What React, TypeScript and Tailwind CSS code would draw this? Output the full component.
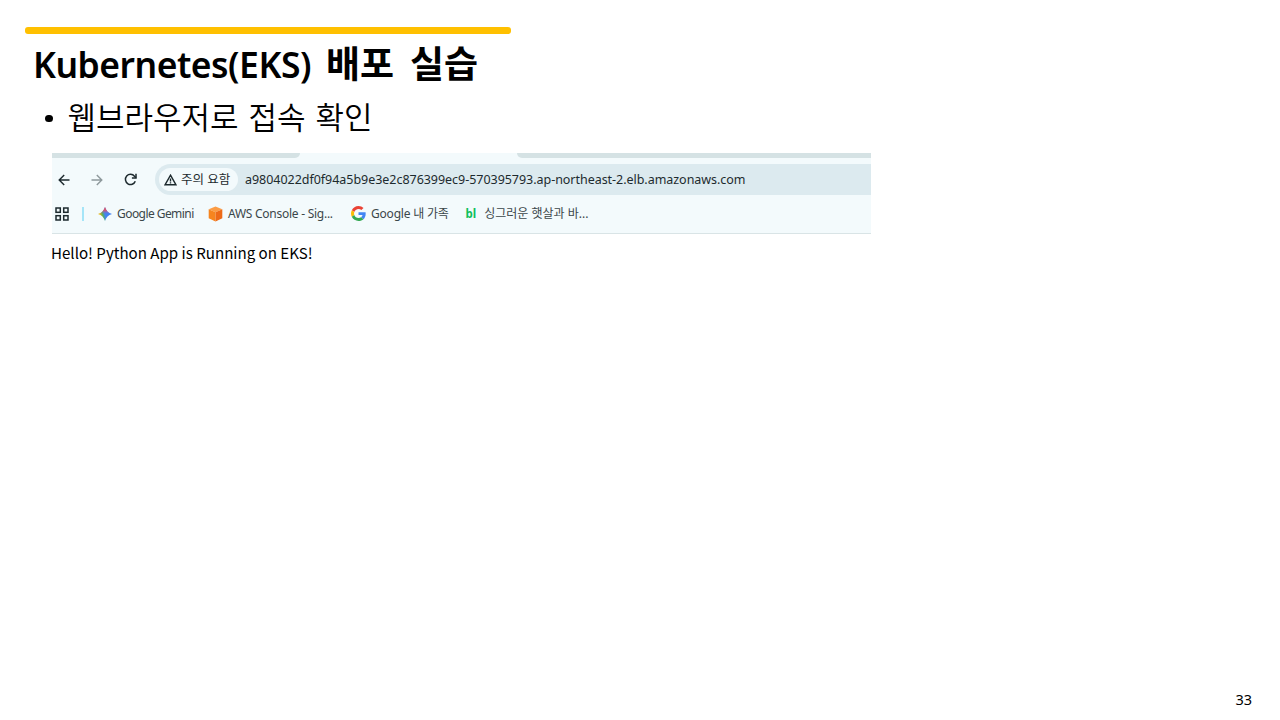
import type { ReactNode } from 'react'

function Bookmark({ icon, className, children }: { icon: ReactNode; className: string; children: ReactNode }) {
  return (
    <div className={`flex shrink-0 items-center ${className}`}>
      {icon}
      <span className="whitespace-nowrap">{children}</span>
    </div>
  )
}

function BackIcon({ className }: { className: string }) {
  return (
    <svg className={className} width="12" height="12" viewBox="0 0 12 12" fill="none" stroke="currentColor" strokeWidth="1.4">
      <path d="M11.5 6H1.2M6.2 1 1.2 6l5 5" />
    </svg>
  )
}

function ReloadIcon() {
  return (
    <svg width="13" height="13" viewBox="0 0 13 13" fill="none" stroke="currentColor" strokeWidth="1.5">
      <path d="M11.3 8.2A5.1 5.1 0 1 1 10.5 3.2L12 4.8" />
      <path d="M12 .8v4.1H7.9" />
    </svg>
  )
}

function WarningIcon() {
  return (
    <svg width="13" height="12" viewBox="0 0 13 12" fill="none" stroke="currentColor" strokeWidth="1.4">
      <path d="M6.5 1.2 12 10.8H1z" />
      <path d="M6.5 4.4v3M6.5 8.2v1.3" />
    </svg>
  )
}

function AppsIcon() {
  return (
    <svg width="14" height="14" viewBox="0 0 14 14" fill="none" stroke="currentColor" strokeWidth="1.5">
      <rect x="1" y="1" width="4.3" height="4.3" />
      <rect x="8.7" y="1" width="4.3" height="4.3" />
      <rect x="1" y="8.7" width="4.3" height="4.3" />
      <rect x="8.7" y="8.7" width="4.3" height="4.3" />
    </svg>
  )
}

function GeminiIcon() {
  return (
    <svg width="14" height="14" viewBox="0 0 14 14">
      <defs>
        <linearGradient id="gemini" x1="2" y1="8" x2="12" y2="6" gradientUnits="userSpaceOnUse">
          <stop offset="0" stopColor="#e8b80c" />
          <stop offset=".28" stopColor="#4fae6a" />
          <stop offset=".5" stopColor="#4485f0" />
          <stop offset="1" stopColor="#3b80f4" />
        </linearGradient>
        <linearGradient id="geminiTop" x1="7" y1="0" x2="7" y2="7" gradientUnits="userSpaceOnUse">
          <stop offset="0" stopColor="#f0434a" />
          <stop offset=".5" stopColor="#e0506a" stopOpacity=".85" />
          <stop offset="1" stopColor="#7a6fd0" stopOpacity="0" />
        </linearGradient>
      </defs>
      <path d="M7 0C8.2 3.8 10.2 5.8 14 7 10.2 8.2 8.2 10.2 7 14 5.8 10.2 3.8 8.2 0 7 3.8 5.8 5.8 3.8 7 0z" fill="url(#gemini)" />
      <path d="M7 0C8.2 3.8 10.2 5.8 14 7H0C3.8 5.8 5.8 3.8 7 0z" fill="url(#geminiTop)" />
    </svg>
  )
}

function CubeIcon() {
  return (
    <svg width="15" height="16" viewBox="0 0 15 16">
      <path d="M7.5.5 14.3 3.3 7.5 6.2.7 3.3z" fill="#fb9c45" />
      <path d="M.7 3.3 7.5 6.2v9.3L.7 12.2z" fill="#f6851f" />
      <path d="M14.3 3.3 7.5 6.2v9.3l6.8-3.3z" fill="#ed6a18" />
    </svg>
  )
}

function GoogleIcon() {
  return (
    <svg width="15" height="15" viewBox="0 0 48 48">
      <path fill="#EA4335" d="M24 9.5c3.54 0 6.71 1.22 9.21 3.6l6.85-6.85C35.9 2.38 30.47 0 24 0 14.62 0 6.51 5.38 2.56 13.22l7.98 6.19C12.43 13.72 17.74 9.5 24 9.5z" />
      <path fill="#4285F4" d="M46.98 24.55c0-1.57-.15-3.09-.38-4.55H24v9.02h12.94c-.58 2.96-2.26 5.48-4.78 7.18l7.73 6c4.51-4.18 7.09-10.36 7.09-17.65z" />
      <path fill="#FBBC05" d="M10.53 28.59A14.5 14.5 0 0 1 9.77 24c0-1.6.27-3.14.76-4.59l-7.98-6.19A23.9 23.9 0 0 0 0 24c0 3.88.92 7.54 2.56 10.78z" />
      <path fill="#34A853" d="M24 48c6.48 0 11.93-2.13 15.89-5.81l-7.73-6c-2.15 1.45-4.92 2.3-8.16 2.3-6.26 0-11.57-4.22-13.47-9.91l-7.98 6.19C6.51 42.62 14.62 48 24 48z" />
    </svg>
  )
}

function BrowserWindow() {
  return (
    <div className="h-[81px] w-[819px] overflow-hidden border-b border-[#d9e4e6] bg-[#f3fafc] font-['Noto_Sans','Noto_Sans_CJK_KR',sans-serif] text-[#1d2a2e]">
      {/* Bottom edge of the tab strip, open under the active tab */}
      <div className="flex h-[5px] justify-between">
        <div className="w-[248px] rounded-br-[8px] bg-[#d5e2e4]" />
        <div className="w-[354px] rounded-bl-[8px] bg-[#d5e2e4]" />
      </div>

      {/* Toolbar */}
      <div className="mt-[6px] flex h-[31px] items-center pl-[6px]">
        <BackIcon className="" />
        <BackIcon className="ml-[21px] rotate-180 text-[#8e999c]" />
        <div className="ml-[21px]"><ReloadIcon /></div>
        <div className="ml-[18px] flex h-full flex-1 items-center rounded-l-full bg-[#dceaef] pl-1">
          <div className="flex h-[23px] w-[79px] items-center rounded-full bg-[#f3fafc] pl-[5px]">
            <WarningIcon />
            <span className="ml-1 pt-px text-[12.5px] whitespace-nowrap">주의 요함</span>
          </div>
          <span className="ml-[7px] pt-[2px] text-[12.5px] tracking-[-0.035px] whitespace-nowrap">
            a9804022df0f94a5b9e3e2c876399ec9-570395793.ap-northeast-2.elb.amazonaws.com
          </span>
        </div>
      </div>

      {/* Bookmarks */}
      <div className="flex h-[37px] items-center pl-[3px] text-[12px] text-[#3b474a]">
        <div className="text-[#1d2a2e]"><AppsIcon /></div>
        <div className="ml-[13px] h-[14px] w-[2px] bg-[#a5e5f8]" />
        <Bookmark className="ml-[14px] w-[110px] gap-[5px] tracking-[-0.56px]" icon={<GeminiIcon />}>Google Gemini</Bookmark>
        <Bookmark className="w-[143px] gap-[5px] tracking-[-0.26px]" icon={<CubeIcon />}>AWS Console - Sig...</Bookmark>
        <Bookmark className="w-[114.5px] gap-[5px] tracking-[-0.2px]" icon={<GoogleIcon />}>Google 내 가족</Bookmark>
        <Bookmark
          className="gap-[8px]"
          icon={<span className="pt-px text-[11.5px] leading-4 font-bold text-[#0fbf5c]">bl</span>}
        >
          싱그러운 햇살과 바...
        </Bookmark>
      </div>
    </div>
  )
}

export default function App() {
  return (
    <div className="flex h-[720px] w-[1280px] flex-col overflow-hidden bg-white font-['Noto_Sans','Noto_Sans_CJK_KR',sans-serif] text-black">
      <div className="mt-[26.5px] ml-[24.5px] h-[7px] w-[486px] rounded-[3px] bg-[#ffc000]" />

      <h1 className="mt-[6.5px] ml-[33px] flex h-[48px] items-center text-[37px] leading-[48px] font-bold whitespace-nowrap">
        <span className="w-[293px] text-[35.5px] font-semibold tracking-[-0.5px]">Kubernetes(EKS)</span>
        <span className="w-[84px]">배포</span>
        <span>실습</span>
      </h1>

      <div className="mt-[7px] ml-[45px] flex h-[44px] items-center text-[31px] leading-[44px] font-[350] whitespace-nowrap">
        <span className="mt-[3px] size-[7.5px] rounded-full bg-black" />
        <span className="ml-[15px] w-[181px]">웹브라우저로</span>
        <span className="w-[67px]">접속</span>
        <span>확인</span>
      </div>

      <div className="mt-[14px] ml-[52px]">
        <BrowserWindow />
        <p className="mt-[6px] -ml-px font-['Noto_Sans_CJK_KR',sans-serif] text-[15.1px] leading-6">Hello! Python App is Running on EKS!</p>
      </div>

      <div className="mt-auto mr-[28px] mb-[11px] self-end text-[14.5px] leading-5">33</div>
    </div>
  )
}
